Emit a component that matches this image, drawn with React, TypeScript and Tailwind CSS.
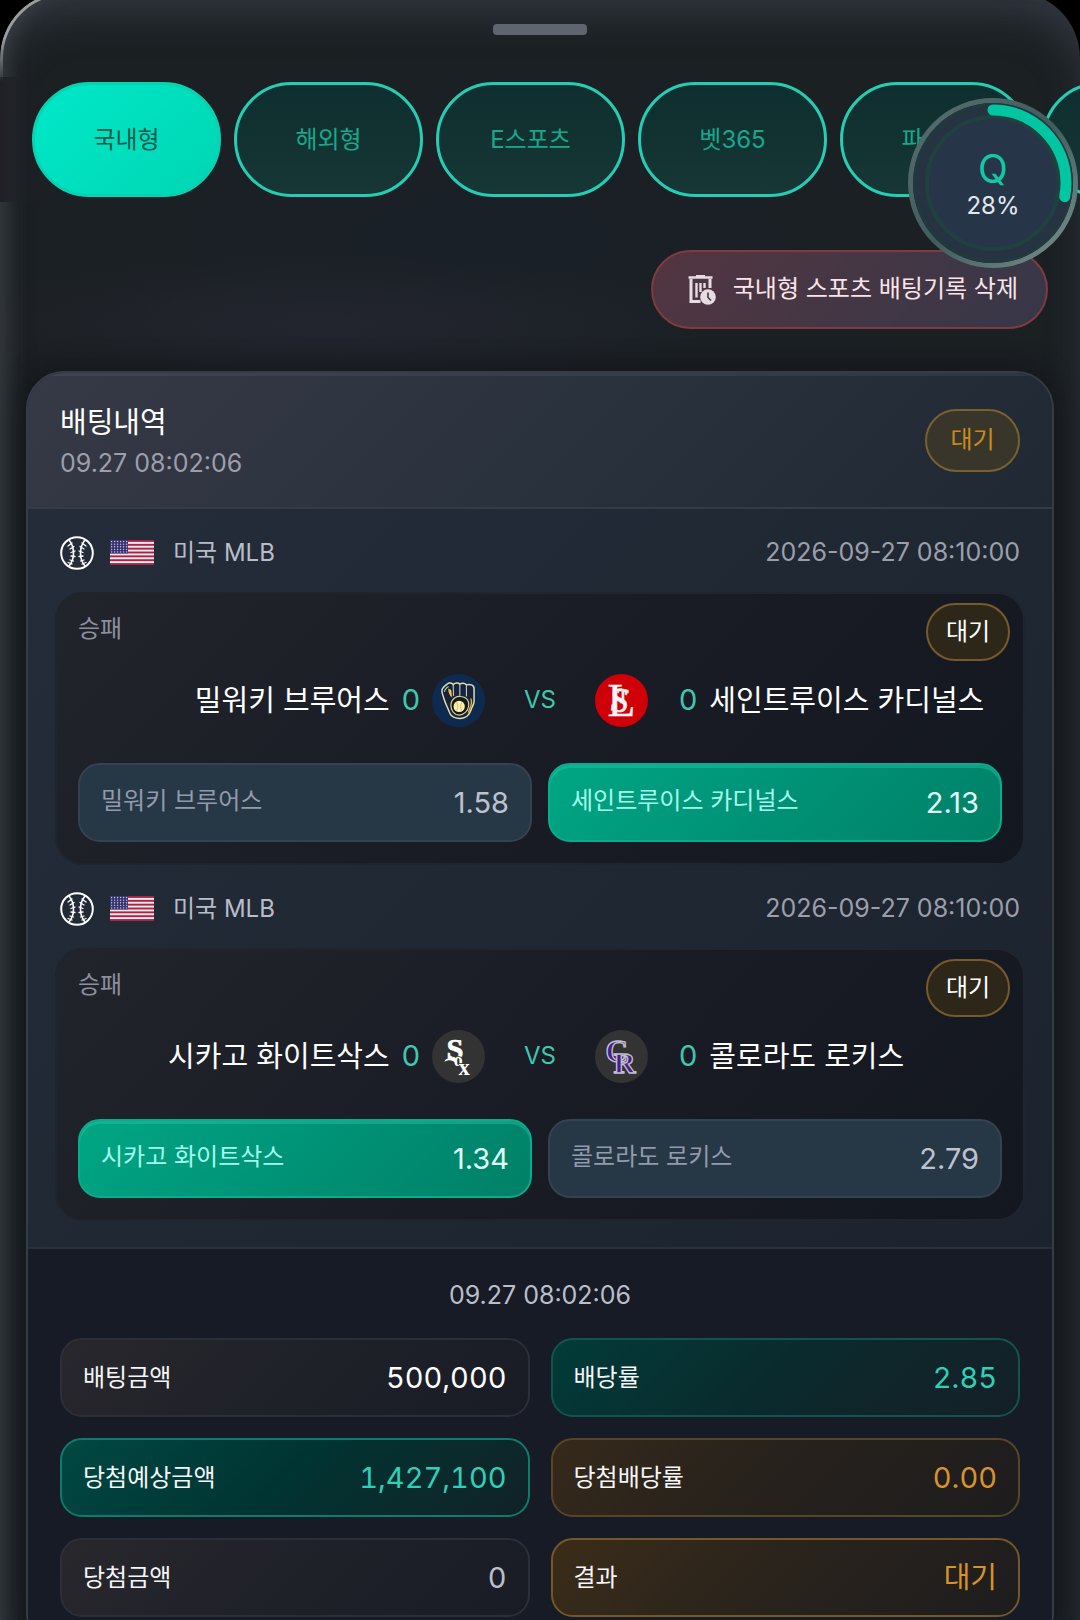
import React from "react";

const tabs = ["국내형", "해외형", "E스포츠", "벳365", "파워볼", "카지노"];

type Team = { name: string; score: number; odds: string; logo: React.ReactNode };
type Match = { league: string; date: string; kind: string; home: Team; away: Team; pick: "home" | "away" };

function BrewersLogo() {
  return (
    <svg viewBox="0 0 160 160" className="size-[53px] shrink-0" aria-hidden="true">
      <circle cx="80" cy="80" r="80" fill="#0f2a4f" />
      <path
        d="M30 52C28 42 40 36 46 30C52 24 62 28 64 32C70 26 80 26 84 31C90 26 100 27 104 33C114 29 127 33 127 45V82C127 92 121 98 118 108C113 124 100 134 86 134C68 135 56 128 51 112C46 98 41 90 38 80C34 68 31 62 30 52Z"
        fill="#17233a"
        stroke="#e5dcae"
        strokeWidth="4.5"
      />
      <path d="M38 54C37 47 44 42 50 38M64 32L65 66M84 31L84 66M104 33L104 68" fill="none" stroke="#b9c3c6" strokeWidth="3.5" />
      <path d="M49 44L58 48L61 71C53 66 49 56 49 44Z" fill="#f0c246" />
      <path d="M117 74C125 92 112 104 110 117" fill="none" stroke="#e0b64a" strokeWidth="4" />
      <path d="M57 92C60 72 76 66 88 68C104 70 113 80 111 96C109 112 96 124 82 124C66 124 56 108 57 92Z" fill="#101c1c" stroke="#e0cf86" strokeWidth="3.5" />
      <circle cx="82" cy="98" r="17" fill="#fff0b0" />
      <path d="M74 86C79 94 79 102 74 110M90 86C85 94 85 102 90 110" fill="none" stroke="#c99d45" strokeWidth="2" />
    </svg>
  );
}

function CardinalsLogo() {
  return (
    <svg viewBox="0 0 160 160" className="size-[53px] shrink-0" aria-hidden="true">
      <circle cx="80" cy="80" r="80" fill="#cf0008" />
      <g fill="#fff2f6" stroke="#fff2f6" fontFamily="Liberation Serif, serif">
        <text x="38" y="126" fontSize="138" strokeWidth="1">L</text>
        <text x="42" y="110" fontSize="104" strokeWidth="2" rotate="6">S</text>
        <text x="68" y="88" fontSize="54" strokeWidth="2">T</text>
      </g>
    </svg>
  );
}

function WhiteSoxLogo() {
  return (
    <svg viewBox="0 0 160 160" className="size-[53px] shrink-0" aria-hidden="true">
      <circle cx="80" cy="80" r="80" fill="#333333" />
      <g fill="#ffffff" fontFamily="Liberation Serif, serif" fontWeight="700">
        <text x="44" y="88" fontSize="92" stroke="#ffffff" strokeWidth="2">S</text>
        <text x="66" y="108" fontSize="54" stroke="#333333" strokeWidth="5" paintOrder="stroke">o</text>
        <text x="80" y="135" fontSize="68" stroke="#333333" strokeWidth="4" paintOrder="stroke">x</text>
      </g>
      <path d="M37 96C44 82 56 84 70 84L72 100C62 90 50 88 37 96Z" fill="#ffffff" />
    </svg>
  );
}

function RockiesLogo() {
  return (
    <svg viewBox="0 0 160 160" className="size-[53px] shrink-0" aria-hidden="true">
      <circle cx="80" cy="80" r="80" fill="#333333" />
      <g fill="#45208a" stroke="#c4c0cf" strokeWidth="4" fontFamily="Liberation Serif, serif" fontWeight="700">
        <text x="32" y="96" fontSize="94">C</text>
        <text x="56" y="131" fontSize="92">R</text>
      </g>
    </svg>
  );
}

function BaseballIcon() {
  return (
    <svg viewBox="0 0 34 34" className="size-[34px] shrink-0" fill="none" stroke="#fff" strokeLinecap="round" aria-hidden="true">
      <circle cx="17" cy="17" r="15.8" strokeWidth="2" />
      <path d="M9 4C15 11 15 23 9 30M25 4C19 11 19 23 25 30" strokeWidth="1.6" />
      <path
        d="M8 10L12 7M10 13L14 10.500M11 16.500L15 15M11 20L15 20.500M10 24L13.500 25M8 26.500L12 28M26 10L22 7M24 13L20 10.500M23 16.500L19 15M23 20L19 20.500M24 24L20.500 25M26 26.500L22 28"
        strokeWidth="1.3"
      />
    </svg>
  );
}

function AutoDeleteIcon() {
  return (
    <svg viewBox="0 0 28 30" className="h-[30px] w-7 shrink-0" fill="none" stroke="#e8dce3" aria-hidden="true">
      <path d="M0.500 2.500H24.500M8 1H17" strokeWidth="2.6" />
      <path d="M3 4V26.500H12.500M22 4V13" strokeWidth="3" />
      <path d="M8.500 8V22.500M12.500 8V17M16.500 8V13" strokeWidth="2.4" />
      <circle cx="20" cy="22" r="7.800" fill="#e8dce3" stroke="none" />
      <path d="M20 17.500V22.500L23 25.500" stroke="#4a3541" strokeWidth="1.6" />
    </svg>
  );
}

function UsFlag() {
  const stripes = [0, 2, 4, 6, 8, 10, 12];
  const rows = [0, 1, 2, 3, 4];
  const cols = [0, 1, 2, 3, 4, 5];
  return (
    <svg viewBox="0 0 44 26" className="h-[25px] w-[44px] shrink-0" preserveAspectRatio="none" aria-label="미국">
      <rect width="44" height="26" fill="#ffe9ee" />
      {stripes.map((i) => (
        <rect key={i} y={i * 2} width="44" height="2" fill="#a92443" />
      ))}
      <rect width="18" height="14" fill="#37346f" />
      {rows.map((r) =>
        cols.map((c) => <circle key={`${r}-${c}`} cx={1.6 + c * 3} cy={1.6 + r * 2.7} r="0.7" fill="#c9c9e6" />)
      )}
    </svg>
  );
}

const matches: Match[] = [
  {
    league: "미국 MLB",
    date: "2026-09-27 08:10:00",
    kind: "승패",
    home: { name: "밀워키 브루어스", score: 0, odds: "1.58", logo: <BrewersLogo /> },
    away: { name: "세인트루이스 카디널스", score: 0, odds: "2.13", logo: <CardinalsLogo /> },
    pick: "away",
  },
  {
    league: "미국 MLB",
    date: "2026-09-27 08:10:00",
    kind: "승패",
    home: { name: "시카고 화이트삭스", score: 0, odds: "1.34", logo: <WhiteSoxLogo /> },
    away: { name: "콜로라도 로키스", score: 0, odds: "2.79", logo: <RockiesLogo /> },
    pick: "home",
  },
];

const summary = [
  { label: "배팅금액", value: "500,000", box: "border-[#2c2f38] from-[#28272c] via-[#1f2129] to-[#191c25]", text: "text-white" },
  { label: "배당률", value: "2.85", box: "border-[#125550] from-[#003b38] via-[#0a2a2d] to-[#141f27]", text: "text-[#2fcfb8]" },
  { label: "당첨예상금액", value: "1,427,100", box: "border-[#0d7c6c] from-[#004843] via-[#003331] to-[#102227]", text: "text-[#2fcfb8]" },
  { label: "당첨배당률", value: "0.00", box: "border-[#574527] from-[#35291a] via-[#26211c] to-[#1d1c1e]", text: "text-[#d6932c]" },
  { label: "당첨금액", value: "0", box: "border-[#2c2f38] from-[#28272c] via-[#1f2129] to-[#191c25]", text: "text-[#bbbec9]" },
  { label: "결과", value: "대기", box: "border-[#75572a] from-[#3b2c18] via-[#29231c] to-[#1d1c1e]", text: "text-[#d6932c]" },
];

function Odds({ team, picked }: { team: Team; picked: boolean }) {
  return (
    <button
      type="button"
      aria-pressed={picked}
      className={
        picked
          ? "flex h-[79px] items-center justify-between rounded-[22px] border-2 border-[#0bab8d] bg-linear-135 from-[#00a684] via-[#009276] to-[#008067] px-[21px] text-[#a5fbec] shadow-[inset_0_3px_0_rgba(45,212,175,0.35)]"
          : "flex h-[79px] items-center justify-between rounded-[22px] border-2 border-[#34434f] bg-[#263746] px-[21px] text-[#929bab]"
      }
    >
      <span className="pb-1 text-[24px] leading-8">{team.name}</span>
      <span className={picked ? "text-[29px] leading-9 text-[#e2fffa]" : "text-[29px] leading-9 text-[#bdc2ce]"}>{team.odds}</span>
    </button>
  );
}

function MatchBlock({ match }: { match: Match }) {
  return (
    <section>
      <div className="flex h-[83px] items-center px-8 pt-1">
        <BaseballIcon />
        <span className="ml-4 flex">
          <UsFlag />
        </span>
        <span className="ml-[19px] text-[24px] text-[#b9bdc8]">{match.league}</span>
        <time className="ml-auto text-[25px] text-[#9c9fab]">{match.date}</time>
      </div>
      <div className="mx-[27px] rounded-[28px] border-2 border-[#1f242d] bg-linear-135 from-[#22242c] via-[#191c24] to-[#131720] pt-[9px] pb-[21px]">
        <div className="flex h-[58px] items-start justify-between pr-[13px] pl-[21px]">
          <span className="text-[24px] leading-[52px] text-[#8d909c]">{match.kind}</span>
          <span className="flex h-[58px] w-[84px] items-center justify-center rounded-full border-2 border-[#78592a] bg-[#2c2719] text-[24px] text-white">대기</span>
        </div>
        <div className="grid h-[78px] grid-cols-[1fr_110px_1fr] items-center">
          <div className="flex items-center justify-end gap-3">
            <span className="pt-0.5 text-[29px] text-white">{match.home.name}</span>
            <span className="text-[29px] text-[#3fc8ae]">{match.home.score}</span>
            {match.home.logo}
          </div>
          <span className="text-center text-[24px] text-[#3fc8ae]">VS</span>
          <div className="flex items-center gap-3">
            {match.away.logo}
            <span className="ml-[19px] text-[29px] text-[#3fc8ae]">{match.away.score}</span>
            <span className="pt-0.5 text-[29px] whitespace-nowrap text-white">{match.away.name}</span>
          </div>
        </div>
        <div className="mt-6 grid grid-cols-2 gap-4 px-[21px]">
          <Odds team={match.home} picked={match.pick === "home"} />
          <Odds team={match.away} picked={match.pick === "away"} />
        </div>
      </div>
    </section>
  );
}

function QuotaDial() {
  return (
    <button type="button" aria-label="Q 28%" className="absolute top-[106px] right-0.5 size-[170px]">
      <svg viewBox="0 0 170 170" className="absolute inset-0 size-full" aria-hidden="true">
        <defs>
          <linearGradient id="rim" x1="0" y1="0" x2="1" y2="1">
            <stop offset="0" stopColor="#5a6e70" />
            <stop offset="0.5" stopColor="#3f5c5c" />
            <stop offset="1" stopColor="#7b9290" />
          </linearGradient>
        </defs>
        <circle cx="85" cy="85" r="82.500" fill="#253342" stroke="url(#rim)" strokeWidth="5" />
        <circle cx="85" cy="85" r="78" fill="none" stroke="#22383e" strokeWidth="4" />
        <circle cx="85" cy="85" r="66" fill="#263648" stroke="#20423f" strokeWidth="4" />
        <circle cx="85" cy="85" r="73" fill="none" stroke="#02c6a1" strokeWidth="11" strokeLinecap="round" pathLength="100" strokeDasharray="28 72" transform="rotate(-90 85 85)" />
      </svg>
      <span className="relative flex flex-col items-center pt-2">
        <span className="text-[39px] leading-[38px] text-[#13c9a5]">Q</span>
        <span className="text-[24px] leading-[36px] text-[#e3e8ee]">28%</span>
      </span>
    </button>
  );
}

export default function App() {
  return (
    <div className="h-screen overflow-hidden bg-black font-[Inter,'Noto_Sans_CJK_KR',sans-serif]">
      <main className="relative -mt-2 min-h-[calc(100vh+8px)] overflow-hidden rounded-t-[66px] bg-[radial-gradient(ellipse_380px_70px_at_30%_20%,#23252e,transparent),radial-gradient(ellipse_500px_200px_at_45%_15%,#1a2028,transparent)] bg-[#1b2023] shadow-[inset_18px_0_20px_-10px_rgba(85,92,88,0.35),inset_0_30px_40px_-10px_rgba(75,82,98,0.5)]">
        <div className="pointer-events-none absolute top-0 left-0 h-[90px] w-[120px] rounded-tl-[66px] border-t-3 border-l-3 border-[#9a9d9d] mask-linear-180 mask-linear-from-50% mask-linear-to-100%" />
        <div className="mx-auto mt-8 h-[11px] w-[94px] rounded-[4px] bg-[#5f656f]" />

        <nav className="mt-[42px] flex gap-[13px] overflow-hidden bg-linear-to-r from-[#1f2027] to-transparent to-4% py-[5px] pl-8">
          {tabs.map((tab, i) => (
            <button
              key={tab}
              type="button"
              className={
                i === 0
                  ? "h-[115px] w-[189px] shrink-0 rounded-full border-3 border-[#06d3b2] bg-linear-135 from-[#00e8c8] to-[#00d6b4] text-[24px] text-[#12594c]"
                  : "h-[115px] w-[189px] shrink-0 rounded-full border-3 border-[#25cdb2] bg-linear-to-b from-[#0f2e2f] to-[#163735] text-[24px] text-[#17a88c]"
              }
            >
              {tab}
            </button>
          ))}
        </nav>

        <div className="mt-12 flex justify-end pr-8">
          <button
            type="button"
            className="flex h-[79px] items-center gap-[17px] rounded-full border-2 border-[#813a40] bg-linear-135 from-[#523540] to-[#363748] pr-7 pl-[35px] text-[24px] text-[#fbe4e8]"
          >
            <AutoDeleteIcon />
            <span className="pb-0.5">국내형 스포츠 배팅기록 삭제</span>
          </button>
        </div>

        <article className="mx-[26px] mt-[42px] overflow-hidden rounded-[38px] border-2 border-[#343c46] bg-linear-135 from-[#242d39] to-[#1a212d] shadow-[0_0_24px_6px_rgba(10,14,18,0.45)]">
          <header className="flex h-[136px] items-center justify-between border-b-2 border-[#343b45] bg-linear-135 from-[#363946] via-[#2a323d] to-[#1f2833] px-8 shadow-[inset_0_3px_0_rgba(255,255,255,0.06)]">
            <div className="pt-0.5">
              <h1 className="text-[29px] leading-[44px] text-white">배팅내역</h1>
              <time className="block text-[25px] leading-[36px] text-[#9c9fab]">09.27 08:02:06</time>
            </div>
            <span className="flex h-[63px] w-[95px] items-center justify-center rounded-full border-2 border-[#7b602f] bg-[#38352b] text-[24px] text-[#c88b1c]">대기</span>
          </header>

          <div className="pb-[26px]">
            {matches.map((match) => (
              <MatchBlock key={match.home.name} match={match} />
            ))}
          </div>

          <footer className="border-t-2 border-[#2a313c] bg-[#161b26] px-8 pb-8">
            <time className="block pt-[29px] pb-[26px] text-center text-[25px] leading-[34px] text-[#bbbfca]">09.27 08:02:06</time>
            <dl className="grid grid-cols-2 gap-[21px]">
              {summary.map((item) => (
                <div key={item.label} className={`flex h-[79px] items-center justify-between rounded-[22px] border-2 bg-linear-135 px-[21px] ${item.box}`}>
                  <dt className="text-[24px] text-[#f5f6f8]">{item.label}</dt>
                  <dd className={`text-[29px] tabular-nums ${item.text}`}>{item.value}</dd>
                </div>
              ))}
            </dl>
          </footer>
        </article>

        <QuotaDial />
      </main>
    </div>
  );
}
